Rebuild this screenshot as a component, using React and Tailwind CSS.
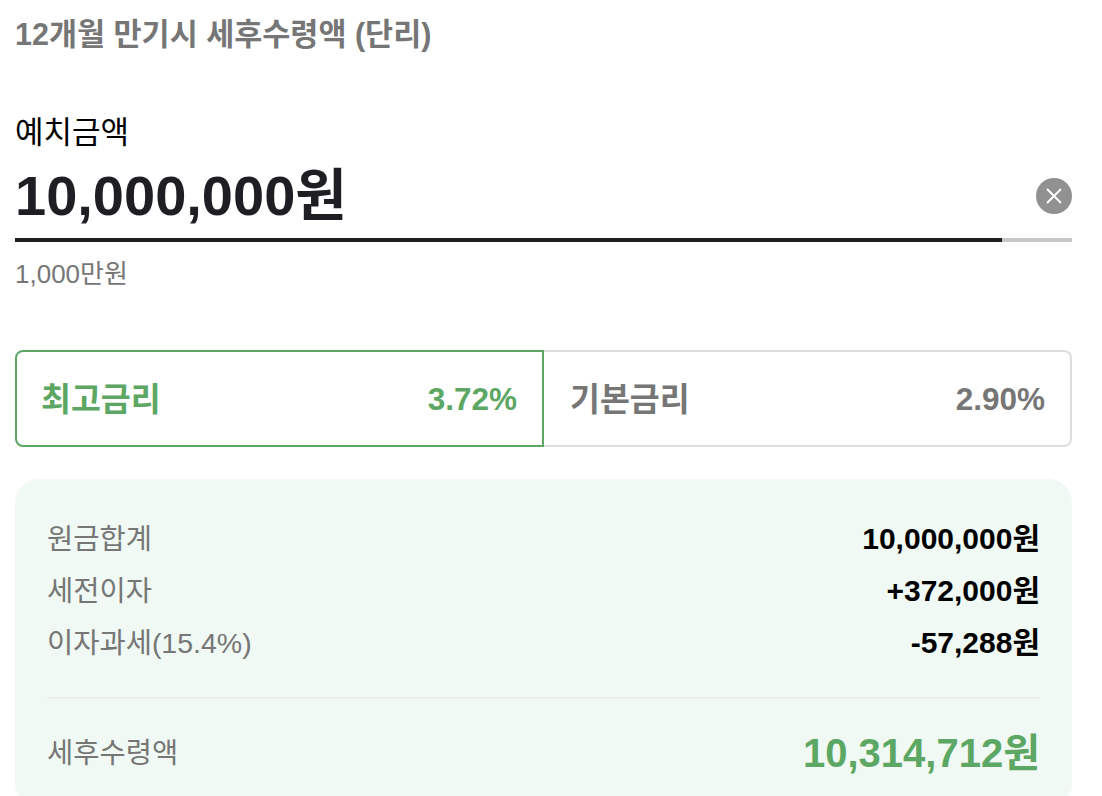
import React from 'react';

const FONT = "font-['Liberation_Sans','Noto_Sans_CJK_KR',sans-serif]";

// One line of the summary panel
const SummaryRow = ({ label, value }) => (
  <div className="flex h-[52px] items-center justify-between">
    <span className="pt-[2px] text-[28.5px] text-[#767676]">{label}</span>
    <span className="text-[30px] font-bold text-black">{value}</span>
  </div>
);

const App = () => {
  return (
    <div className={`${FONT} h-[796px] w-[1102px] overflow-hidden bg-white pl-[15px] pr-[30px]`}>
      {/* Title */}
      <h1 className="pt-[14px] text-[30.5px] leading-[40px] font-bold text-[#767676]">
        12개월 만기시 세후수령액 (단리)
      </h1>

      {/* Deposit amount */}
      <p className="mt-[59px] text-[31px] leading-[40px] text-black">예치금액</p>
      <div className="flex h-[86px] items-center justify-between">
        <span className="text-[56px] leading-none font-bold text-[#1e1e23]">10,000,000원</span>
        <button className="flex h-9 w-9 items-center justify-center rounded-full bg-[#919191]" aria-label="지우기">
          <svg width="18" height="18" viewBox="0 0 18 18" fill="none" stroke="white" strokeWidth="2">
            <path d="M2 2 16 16M16 2 2 16" />
          </svg>
        </button>
      </div>
      <div className="mt-[-1px] flex h-1">
        <div className="w-[987px] bg-[#1e1e23]" />
        <div className="flex-1 bg-[#c8c8c8]" />
      </div>
      <p className="mt-[14px] text-[26px] leading-[36px] text-[#767676]">1,000만원</p>

      {/* Rate tabs */}
      <div className="mt-[58px] flex h-[97px]">
        <div className="flex w-[529px] items-center justify-between rounded-l-lg border-2 border-[#5ca763] pt-[3px] pr-[25px] pl-[24px] text-[#5ca763]">
          <span className="text-[32.5px] font-bold">최고금리</span>
          <span className="text-[31.5px] font-bold">3.72%</span>
        </div>
        <div className="flex flex-1 items-center justify-between rounded-r-lg border-2 border-l-0 border-[#dddddd] pt-[3px] pr-[25px] pl-[26px] text-[#767676]">
          <span className="text-[32.5px] font-bold">기본금리</span>
          <span className="text-[31.5px] font-bold">2.90%</span>
        </div>
      </div>

      {/* Summary panel, runs past the bottom of the window */}
      <div className="mt-[32px] h-[328px] rounded-[24px] bg-[#f0f9f3] px-[32px] pt-[33px]">
        <SummaryRow label="원금합계" value="10,000,000원" />
        <SummaryRow label="세전이자" value="+372,000원" />
        <SummaryRow label="이자과세(15.4%)" value="-57,288원" />
        <div className="mt-[29px] h-0.5 bg-[#eeeeee]" />
        <div className="mt-[24px] flex items-center justify-between">
          <span className="text-[28.5px] text-[#767676]">세후수령액</span>
          <span className="text-[40px] font-bold text-[#5ca763]">10,314,712원</span>
        </div>
      </div>
    </div>
  );
};

export default App;
